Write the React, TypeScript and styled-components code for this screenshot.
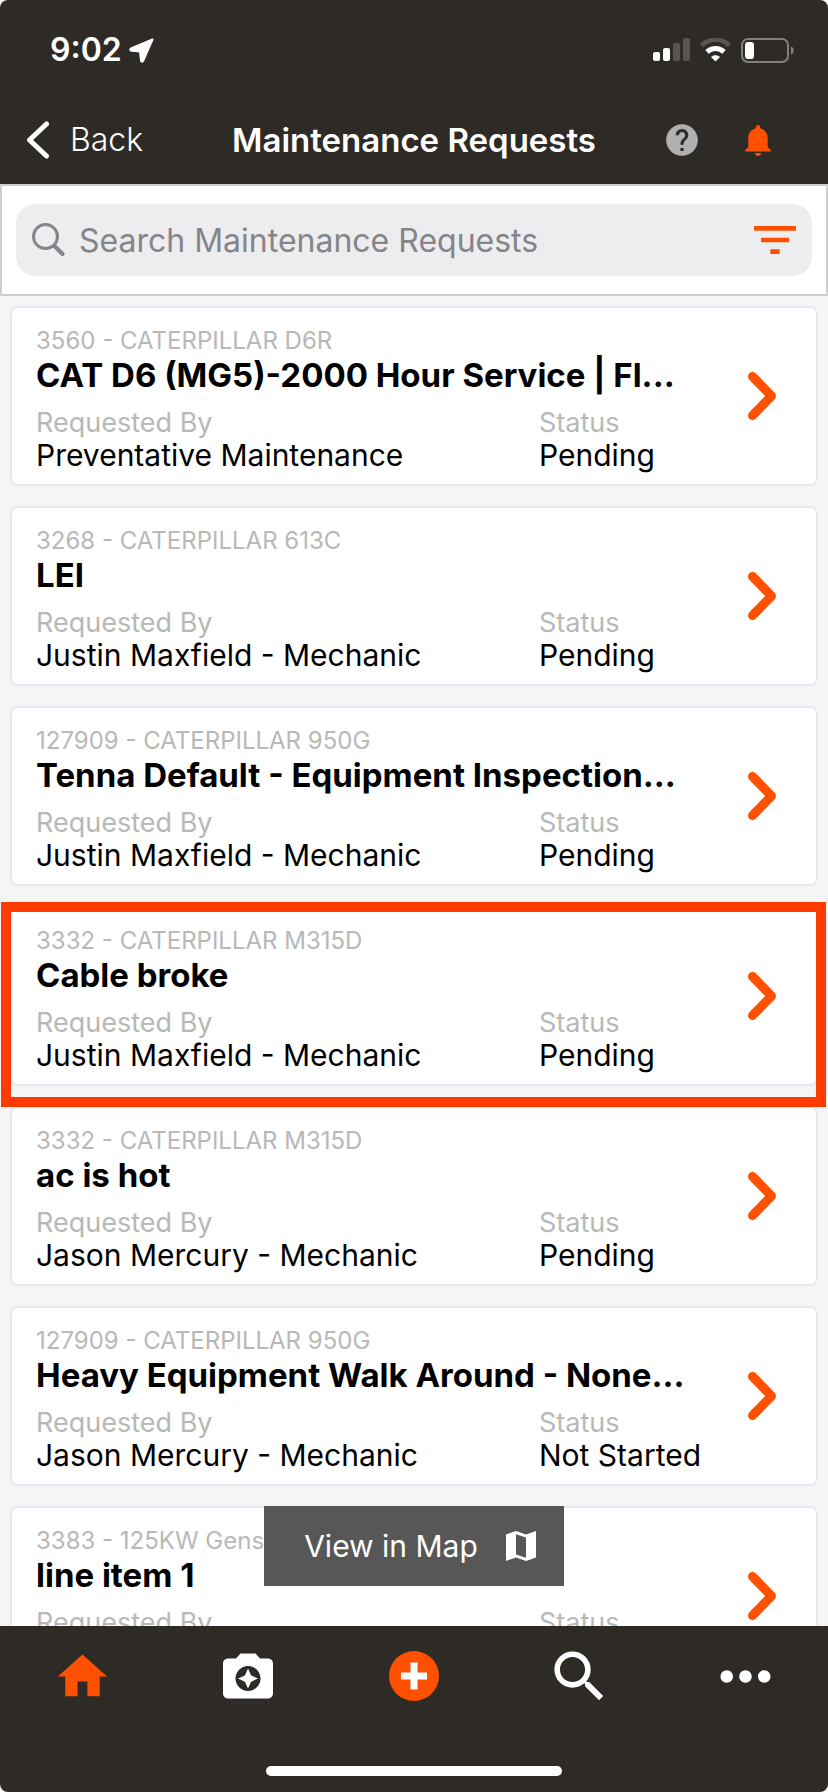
import React from "react";
import styled, { createGlobalStyle } from "styled-components";
import { MdCameraEnhance, MdFilterList, MdHelp, MdHome, MdMoreHoriz, MdSearch } from "react-icons/md";

const colors = {
  bar: "#2e2a26",
  accent: "#ff5000",
  outline: "#ff3a00",
  page: "#f5f5f5",
  muted: "#b8b8b8",
  cardBorder: "#e4e9f0",
};

const GlobalStyle = createGlobalStyle`
  * { box-sizing: border-box; }
  body {
    margin: 0;
    background: #fff;
    font-family: Inter, "Noto Sans", sans-serif;
  }
  button { border: 0; padding: 0; background: none; font: inherit; color: inherit; cursor: pointer; }
  svg { display: block; flex: none; }
`;

const Screen = styled.div`
  display: flex;
  flex-direction: column;
  height: 100vh;
  overflow: hidden;
  border-radius: 8px;
  background: ${colors.page};
`;

const Header = styled.header`
  flex: none;
  background: ${colors.bar};
  color: #fff;
`;

const StatusBar = styled.div`
  display: flex;
  align-items: center;
  justify-content: space-between;
  height: 96px;
  padding: 4px 34px 0 50px;
`;

const StatusGroup = styled.div<{ $gap: number }>`
  display: flex;
  align-items: center;
  gap: ${(p) => p.$gap}px;
`;

const Clock = styled.time`
  font-size: 32px;
  font-weight: 600;
  line-height: 40px;
`;

const NavBar = styled.div`
  display: grid;
  grid-template-columns: 1fr auto 1fr;
  align-items: center;
  height: 88px;
  padding: 0 26px;
`;

const BackButton = styled.button`
  display: flex;
  align-items: center;
  gap: 20px;
  font-size: 32px;
  font-weight: 300;
  line-height: 40px;
`;

const NavTitle = styled.h1`
  margin: 0;
  font-size: 33px;
  font-weight: 600;
  line-height: 40px;
`;

const NavActions = styled.div`
  display: flex;
  align-items: center;
  justify-content: flex-end;
  gap: 44px;
  padding-right: 31px;
`;

const IconButton = styled.button<{ $color?: string }>`
  display: flex;
  align-items: center;
  justify-content: center;
  color: ${(p) => p.$color ?? "#fff"};
`;

const SearchPanel = styled.div`
  flex: none;
  padding: 18px 14px;
  border: 2px solid #cfcfcf;
  background: #fff;
`;

const SearchField = styled.label`
  display: flex;
  align-items: center;
  height: 72px;
  padding: 0 9px 0 16px;
  gap: 14px;
  border-radius: 20px;
  background: #ededef;
`;

const SearchInput = styled.input`
  flex: 1;
  min-width: 0;
  padding: 2px 0 0;
  border: 0;
  outline: 0;
  background: none;
  font-family: inherit;
  font-size: 32px;
  line-height: 40px;
  color: #000;
  &::placeholder { color: #85848a; opacity: 1; }
`;

const ListArea = styled.main`
  position: relative;
  flex: 1;
  min-height: 0;
`;

const RequestList = styled.ul`
  display: flex;
  flex-direction: column;
  gap: 20px;
  height: 100%;
  margin: 0;
  padding: 10px;
  overflow-y: auto;
  scrollbar-width: none;
  list-style: none;
`;

const RequestCard = styled.li`
  position: relative;
  flex: none;
  display: flex;
  align-items: center;
  justify-content: space-between;
  height: 180px;
  padding: 0 40px 0 24px;
  border: 2px solid ${colors.cardBorder};
  border-radius: 8px;
  background: #fff;
`;

const Highlight = styled.div`
  position: absolute;
  z-index: 1;
  inset: -6px -10px -23px -11px;
  border: 10px solid ${colors.outline};
  pointer-events: none;
`;

const CardBody = styled.div`
  flex: 1;
  min-width: 0;
  padding-top: 4px;
`;

const Asset = styled.div`
  font-size: 24px;
  line-height: 32px;
  color: ${colors.muted};
`;

const RequestTitle = styled.h2`
  margin: 0 0 14px;
  font-size: 33px;
  font-weight: 700;
  line-height: 36px;
  white-space: nowrap;
`;

const Facts = styled.dl`
  display: grid;
  grid-template-columns: 1fr 209px;
  margin: 0;
`;

const FactLabel = styled.dt`
  font-size: 27px;
  line-height: 32px;
  color: ${colors.muted};
`;

const FactValue = styled.dd`
  margin: 0;
  font-size: 30px;
  line-height: 32px;
  white-space: nowrap;
`;

const MapButton = styled.button`
  position: absolute;
  bottom: 40px;
  left: 50%;
  display: flex;
  align-items: center;
  justify-content: center;
  gap: 28px;
  width: 300px;
  height: 80px;
  padding-left: 12px;
  transform: translateX(-50%);
  background: #575757;
  color: #fff;
  font-size: 30px;
  line-height: 40px;
`;

const TabBar = styled.nav`
  flex: none;
  display: flex;
  flex-direction: column;
  align-items: center;
  justify-content: space-between;
  height: 166px;
  padding: 10px 0 16px;
  background: ${colors.bar};
`;

const Tabs = styled.div`
  display: grid;
  grid-template-columns: repeat(5, 1fr);
  width: 100%;
  height: 80px;
`;

const HomeIndicator = styled.div`
  width: 296px;
  height: 10px;
  border-radius: 5px;
  background: #fff;
`;

interface Request {
  asset: string;
  title: string;
  requestedBy: string;
  status: string;
  selected?: boolean;
}

const requests: Request[] = [
  { asset: "3560 - CATERPILLAR D6R", title: "CAT D6 (MG5)-2000 Hour Service | Fl...", requestedBy: "Preventative Maintenance", status: "Pending" },
  { asset: "3268 - CATERPILLAR 613C", title: "LEI", requestedBy: "Justin Maxfield - Mechanic", status: "Pending" },
  { asset: "127909 - CATERPILLAR 950G", title: "Tenna Default - Equipment Inspection...", requestedBy: "Justin Maxfield - Mechanic", status: "Pending" },
  { asset: "3332 - CATERPILLAR M315D", title: "Cable broke", requestedBy: "Justin Maxfield - Mechanic", status: "Pending", selected: true },
  { asset: "3332 - CATERPILLAR M315D", title: "ac is hot", requestedBy: "Jason Mercury - Mechanic", status: "Pending" },
  { asset: "127909 - CATERPILLAR 950G", title: "Heavy Equipment Walk Around - None...", requestedBy: "Jason Mercury - Mechanic", status: "Not Started" },
  { asset: "3383 - 125KW Genset", title: "line item 1", requestedBy: "Jason Mercury - Mechanic", status: "Pending" },
];

const LocationArrow = () => (
  <svg width="25" height="25" viewBox="0 0 25 25" fill="#fff" stroke="#fff" strokeWidth="2" strokeLinejoin="round" aria-hidden="true">
    <path d="M23.500 1.500 2 10.500C.8 11.200 1 12.700 2.500 12.800L11 13.500 12 22.500C12.200 24 13.500 24 14.200 22.800Z" />
  </svg>
);

const Signal = () => (
  <svg width="37" height="24" viewBox="0 0 37 24" aria-hidden="true">
    <rect x="0" y="14" width="7" height="9" rx="2" fill="#fff" />
    <rect x="10" y="10" width="7" height="13" rx="2" fill="#fff" />
    <rect x="20" y="5" width="7" height="18" rx="2" fill="#5a5552" />
    <rect x="30" y="0" width="7" height="23" rx="2" fill="#5a5552" />
  </svg>
);

const Wifi = () => (
  <svg width="31" height="24" viewBox="0 0 31 24" fill="none" aria-hidden="true">
    <path d="M1.500 7.500C9.500-.100 21.500-.100 29.500 7.500" stroke="#5a5552" strokeWidth="4.500" />
    <path d="M7 13.800C12 9.300 19 9.300 24 13.800" stroke="#fff" strokeWidth="5" />
    <path d="M11 19C13.500 16.700 17.500 16.700 20 19L15.500 23.500Z" fill="#fff" />
  </svg>
);

const Battery = () => (
  <svg width="53" height="25" viewBox="0 0 53 25" aria-hidden="true">
    <rect x="1" y="1" width="46" height="23" rx="6" fill="none" stroke="#83807d" strokeWidth="2" />
    <rect x="4" y="4" width="9" height="17" rx="3" fill="#fff" />
    <path d="M50 8.500C53.500 9.500 53.500 15.500 50 16.500Z" fill="#83807d" />
  </svg>
);

const BackChevron = () => (
  <svg width="24" height="38" viewBox="0 0 24 38" fill="none" stroke="#fff" strokeWidth="5" strokeLinecap="round" strokeLinejoin="round" aria-hidden="true">
    <path d="M20.500 3 3.500 19 20.500 35" />
  </svg>
);

const Bell = () => (
  <svg width="26" height="31" viewBox="0 0 26 31" fill={colors.accent} aria-hidden="true">
    <path d="M10.800 2.200C10.800-.700 15.200-.700 15.200 2.200V3.300C20 4.800 22.700 8.500 22.700 13V21.500C22.700 23.500 26 24 26 26.500H0C0 24 3.300 23.500 3.300 21.500V13C3.300 8.500 6 4.800 10.800 3.300Z" />
    <path d="M10 28H16C16 32 10 32 10 28Z" />
  </svg>
);

const RowChevron = () => (
  <svg width="28" height="50" viewBox="0 0 28 50" fill="none" stroke={colors.accent} strokeWidth="9" strokeLinecap="round" strokeLinejoin="round" aria-hidden="true">
    <path d="M4.500 5.500 23.500 25 4.500 44.500" />
  </svg>
);

const Magnifier = () => (
  <svg width="33" height="34" viewBox="0 0 33 34" fill="none" stroke="#85848a" strokeLinecap="round" aria-hidden="true">
    <circle cx="13.500" cy="13.500" r="12" strokeWidth="3" />
    <path d="m22.500 23 8 8" strokeWidth="4" />
  </svg>
);

const MapIcon = () => (
  <svg width="30" height="30" viewBox="0 0 30 30" fill="#fff" aria-hidden="true">
    <path fillRule="evenodd" d="M0 3.500 10 0 20 3.500 30 0V26.500L20 30 10 26.500 0 30ZM10 3.300V23.500L20 26.700V6.500Z" />
  </svg>
);

const AddIcon = () => (
  <svg width="50" height="50" viewBox="0 0 50 50" aria-hidden="true">
    <circle cx="25" cy="25" r="25" fill={colors.accent} />
    <path d="M12 25H38M25 11.500V38.500" stroke="#fff" strokeWidth="7" />
  </svg>
);

export default function App() {
  return (
    <Screen>
      <GlobalStyle />
      <Header>
        <StatusBar>
          <StatusGroup $gap={7}>
            <Clock>9:02</Clock>
            <LocationArrow />
          </StatusGroup>
          <StatusGroup $gap={10}>
            <Signal />
            <Wifi />
            <Battery />
          </StatusGroup>
        </StatusBar>
        <NavBar>
          <BackButton type="button">
            <BackChevron />
            Back
          </BackButton>
          <NavTitle>Maintenance Requests</NavTitle>
          <NavActions>
            <IconButton type="button" aria-label="Help" $color="#b0b0b0"><MdHelp size={38} /></IconButton>
            <IconButton type="button" aria-label="Notifications"><Bell /></IconButton>
          </NavActions>
        </NavBar>
      </Header>
      <SearchPanel>
        <SearchField>
          <Magnifier />
          <SearchInput type="search" aria-label="Search Maintenance Requests" placeholder="Search Maintenance Requests" />
          <IconButton type="button" aria-label="Filter" $color={colors.accent}><MdFilterList size={56} /></IconButton>
        </SearchField>
      </SearchPanel>
      <ListArea>
        <RequestList>
          {requests.map((r, i) => (
            <RequestCard key={i}>
              <CardBody>
                <Asset>{r.asset}</Asset>
                <RequestTitle>{r.title}</RequestTitle>
                <Facts>
                  <FactLabel>Requested By</FactLabel>
                  <FactLabel>Status</FactLabel>
                  <FactValue>{r.requestedBy}</FactValue>
                  <FactValue>{r.status}</FactValue>
                </Facts>
              </CardBody>
              <IconButton type="button" aria-label={`Open ${r.title}`}><RowChevron /></IconButton>
              {r.selected && <Highlight />}
            </RequestCard>
          ))}
        </RequestList>
        <MapButton type="button">
          View in Map
          <MapIcon />
        </MapButton>
      </ListArea>
      <TabBar aria-label="Main">
        <Tabs>
          <IconButton type="button" aria-label="Home" $color={colors.accent}><MdHome size={59} /></IconButton>
          <IconButton type="button" aria-label="Camera"><MdCameraEnhance size={60} /></IconButton>
          <IconButton type="button" aria-label="Add"><AddIcon /></IconButton>
          <IconButton type="button" aria-label="Search"><MdSearch size={67} /></IconButton>
          <IconButton type="button" aria-label="More"><MdMoreHoriz size={75} /></IconButton>
        </Tabs>
        <HomeIndicator />
      </TabBar>
    </Screen>
  );
}
